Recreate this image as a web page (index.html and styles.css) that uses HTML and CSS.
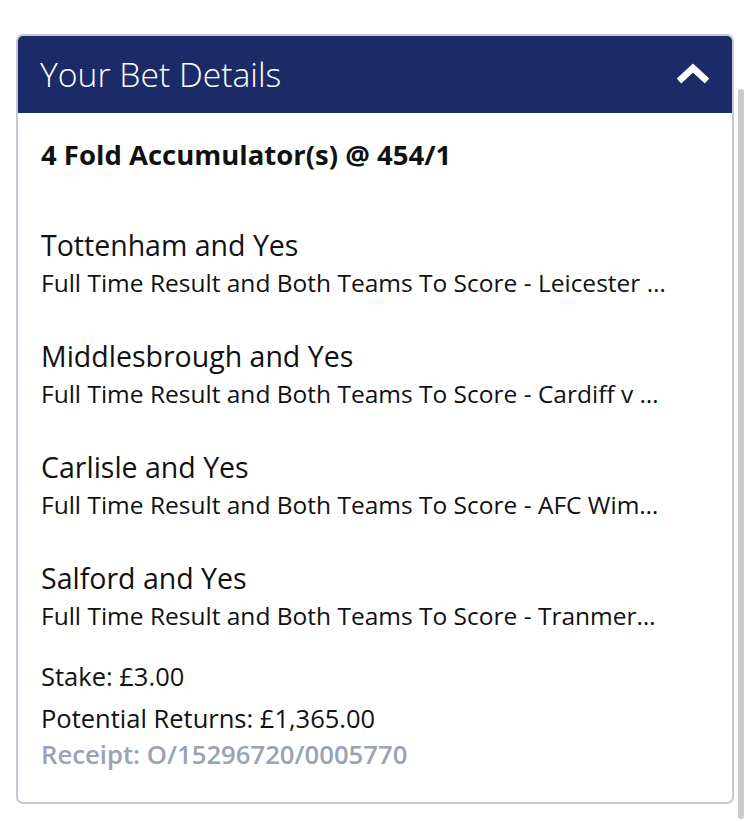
FILE: index.html
```html
<!DOCTYPE html>
<html>
<head>
<meta charset="utf-8">
<link rel="stylesheet" href="styles.css">
</head>
<body>
<div class="page">
  <div class="card">
    <div class="card-header">
      <span class="card-title">Your Bet Details</span>
      <svg class="chevron" width="34" height="22" viewBox="0 0 34 22"><path d="M3 18 L17 5 L31 18" fill="none" stroke="#fff" stroke-width="6.5" stroke-linejoin="miter"/></svg>
    </div>
    <div class="card-body">
      <div class="bet-type">4 Fold Accumulator(s) @ 454/1</div>
      <div class="selections">
        <div class="selection">
          <div class="sel-name">Tottenham and Yes</div>
          <div class="sel-desc">Full Time Result and Both Teams To Score - Leicester v Tottenham</div>
        </div>
        <div class="selection">
          <div class="sel-name">Middlesbrough and Yes</div>
          <div class="sel-desc">Full Time Result and Both Teams To Score - Cardiff v Middlesbrough</div>
        </div>
        <div class="selection">
          <div class="sel-name">Carlisle and Yes</div>
          <div class="sel-desc">Full Time Result and Both Teams To Score - AFC Wimbledon v Carlisle</div>
        </div>
        <div class="selection">
          <div class="sel-name">Salford and Yes</div>
          <div class="sel-desc">Full Time Result and Both Teams To Score - Tranmere v Salford</div>
        </div>
      </div>
      <div class="summary">
        <div class="stake">Stake: £3.00</div>
        <div class="returns">Potential Returns: £1,365.00</div>
        <div class="receipt">Receipt: O/15296720/0005770</div>
      </div>
    </div>
  </div>
  <div class="scrollbar"></div>
</div>
</body>
</html>
```
FILE: styles.css
```css
html, body {
  margin: 0;
  padding: 0;
  background: #fff;
}
body {
  font-family: "Open Sans", "Liberation Sans", sans-serif;
  color: #111;
}
.page {
  position: relative;
  width: 750px;
  height: 821px;
  padding: 34px 16px 0 16px;
  box-sizing: border-box;
}
.card {
  width: 718px;
  height: 770px;
  box-sizing: border-box;
  border: 2px solid #c4c8d2;
  border-radius: 7px;
  overflow: hidden;
  display: flex;
  flex-direction: column;
}
.card-header {
  background: #1c2b68;
  height: 79px;
  flex: none;
  margin: -2px -2px 0 -2px;
  padding: 0 24px 0 24px;
  display: flex;
  align-items: center;
  justify-content: space-between;
  border-radius: 7px 7px 0 0;
}
.card-title {
  color: #fff;
  font-size: 33.7px;
  font-weight: 300;
  line-height: 40px;
  margin-top: 1px;
}
.card-body {
  padding: 26px 22px 0 23px;
}
.bet-type {
  font-size: 27.5px;
  font-weight: 700;
  line-height: 32px;
}
.selections {
  margin-top: 56px;
  display: flex;
  flex-direction: column;
  gap: 35px;
}
.sel-name {
  font-size: 28.5px;
  line-height: 36px;
}
.sel-desc {
  font-size: 24.5px;
  line-height: 40px;
  max-width: 626px;
  white-space: nowrap;
  overflow: hidden;
  text-overflow: ellipsis;
}
.summary {
  margin-top: 19px;
}
.stake, .returns {
  font-size: 25.5px;
  line-height: 42px;
}
.receipt {
  font-size: 25.7px;
  font-weight: 600;
  color: #9aa2b6;
  line-height: 32px;
}
.scrollbar {
  position: absolute;
  left: 738px;
  top: 89px;
  width: 6px;
  height: 730px;
  border-radius: 3px;
  background: #c9c9c9;
}
```
